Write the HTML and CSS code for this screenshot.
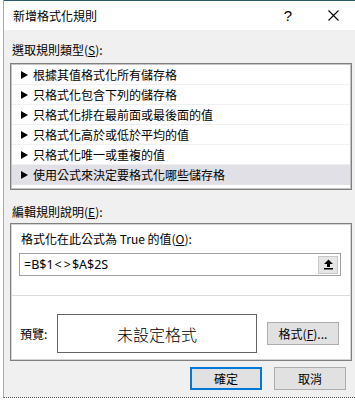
FILE: index.html
```html
<!DOCTYPE html>
<html>
<head>
    <title>新增格式化規則</title>
    <link rel="stylesheet" href="styles.css">
</head>
<body>
    <div class="dialog">
        <div class="titlebar">
            <span class="title">新增格式化規則</span>
            <span class="caption-btn help">?</span>
            <span class="caption-btn close">
                <svg width="11" height="11" viewBox="0 0 11 11">
                    <path d="M0.5 0.5 L10.5 10.5 M10.5 0.5 L0.5 10.5" stroke="#000" stroke-width="1.1" fill="none"/>
                </svg>
            </span>
        </div>

        <div class="content">
            <div class="label">選取規則類型(<u>S</u>):</div>
            <div class="listbox">
                <div class="item"><span class="arrow"></span>根據其值格式化所有儲存格</div>
                <div class="item"><span class="arrow"></span>只格式化包含下列的儲存格</div>
                <div class="item"><span class="arrow"></span>只格式化排在最前面或最後面的值</div>
                <div class="item"><span class="arrow"></span>只格式化高於或低於平均的值</div>
                <div class="item"><span class="arrow"></span>只格式化唯一或重複的值</div>
                <div class="item selected"><span class="arrow"></span>使用公式來決定要格式化哪些儲存格</div>
            </div>

            <div class="label label-edit">編輯規則說明(<u>E</u>):</div>
            <div class="group">
                <div class="rule-top">
                    <div class="label">格式化在此公式為 True 的值(<u>O</u>):</div>
                    <div class="formula">
                        <span class="formula-text">=B$1<span class="op">&lt;</span><span class="op">&gt;</span>$A$2S</span>
                        <span class="collapse-btn">
                            <svg width="11" height="11" viewBox="0 0 11 11">
                                <path d="M5.5 0.5 L10 5 L7 5 L7 8 L4 8 L4 5 L1 5 Z" fill="#000"/>
                                <rect x="1" y="9" width="9" height="1.5" fill="#000"/>
                            </svg>
                        </span>
                    </div>
                </div>
                <div class="rule-bottom">
                    <span class="preview-label">預覽:</span>
                    <div class="preview">未設定格式</div>
                    <button class="btn format-btn">格式(<u>F</u>)...</button>
                </div>
            </div>

            <div class="actions">
                <button class="btn btn-default">確定</button>
                <button class="btn">取消</button>
            </div>
        </div>
    </div>
</body>
</html>
```

FILE: styles.css
```css
body {
    margin: 0;
    padding: 0;
    width: 355px;
    height: 400px;
    overflow: hidden;
    background-color: #fff;
    font-family: "Noto Sans CJK TC", "Noto Sans", sans-serif;
    font-size: 12px;
    color: #000;
}

.dialog {
    margin-left: 3px;
    height: 397px;
    background-color: #f0f0f0;
    border-left: 1px solid #a8a8a8;
    border-bottom: 1px dotted #555;
}

/* title bar */
.titlebar {
    height: 29px;
    background-color: #fff;
    border-top: 1px solid #2b5a72;
    display: flex;
    align-items: center;
}

.title {
    padding-left: 9px;
    flex: 1;
    line-height: 16px;
}

.caption-btn {
    width: 46px;
    height: 29px;
    display: flex;
    align-items: center;
    justify-content: center;
}

.help {
    font-family: "Liberation Sans", sans-serif;
    font-size: 15px;
    padding-left: 3px;
}

.close {
    width: 44px;
}

/* body */
.content {
    padding: 12px 3px 0 6px;
}

.label {
    height: 16px;
    line-height: 16px;
    margin-left: 2px;
    white-space: nowrap;
}

.listbox {
    margin-top: 5px;
    height: 127px;
    box-sizing: border-box;
    background-color: #fff;
    border: 1px solid #7f7f7f;
    box-shadow: inset 0 0 0 1px #c4c4c4;
    padding: 1px;
}

.item {
    height: 20px;
    box-sizing: border-box;
    border-bottom: 1px solid #f0f0f0;
    display: flex;
    align-items: center;
    padding-left: 9px;
    white-space: nowrap;
}

.item.selected {
    background-color: #e0e0e6;
    border-bottom-color: #e0e0e6;
}

.arrow {
    width: 0;
    height: 0;
    border-top: 4px solid transparent;
    border-bottom: 4px solid transparent;
    border-left: 7px solid #000;
    margin-right: 5px;
}

.label-edit {
    margin-top: 14px;
}

/* edit rule group */
.group {
    margin-top: 3px;
    height: 138px;
    box-sizing: border-box;
    background-color: #fff;
    border: 1px solid #7f7f7f;
    box-shadow: inset 0 0 0 1px #d4d4d4;
}

.rule-top {
    height: 72px;
    box-sizing: border-box;
    border-bottom: 1px solid #dcdcdc;
    padding: 7px 0 0 8px;
}

.formula {
    margin-top: 6px;
    width: 322px;
    height: 23px;
    box-sizing: border-box;
    border: 1px solid #a0a0a0;
    display: flex;
    align-items: center;
    justify-content: space-between;
    padding-left: 4px;
    padding-right: 2px;
}

.formula-text {
    font-family: "Noto Sans", sans-serif;
    font-size: 12.5px;
}

.op {
    padding: 0 1px;
}

.collapse-btn {
    width: 20px;
    height: 18px;
    box-sizing: border-box;
    background-color: #e6e6e6;
    border: 1px solid #c8c8c8;
    display: flex;
    align-items: center;
    justify-content: center;
}

.rule-bottom {
    display: flex;
    align-items: center;
    padding: 18px 0 0 9px;
}

.preview-label {
    width: 37px;
}

.preview {
    width: 200px;
    height: 39px;
    box-sizing: border-box;
    border: 1px solid #646464;
    display: flex;
    align-items: center;
    justify-content: center;
    font-size: 16px;
    font-weight: 300;
}

.btn {
    width: 72px;
    height: 23px;
    box-sizing: border-box;
    padding: 0;
    background-color: #e1e1e1;
    border: 1px solid #adadad;
    font-family: "Noto Sans CJK TC", "Noto Sans", sans-serif;
    font-size: 12px;
    color: #000;
}

.format-btn {
    margin-left: 10px;
}

.actions {
    margin-top: 6px;
    display: flex;
    justify-content: flex-end;
    gap: 12px;
    padding-right: 6px;
}

.btn-default {
    border: 2px solid #0078d7;
}
```
